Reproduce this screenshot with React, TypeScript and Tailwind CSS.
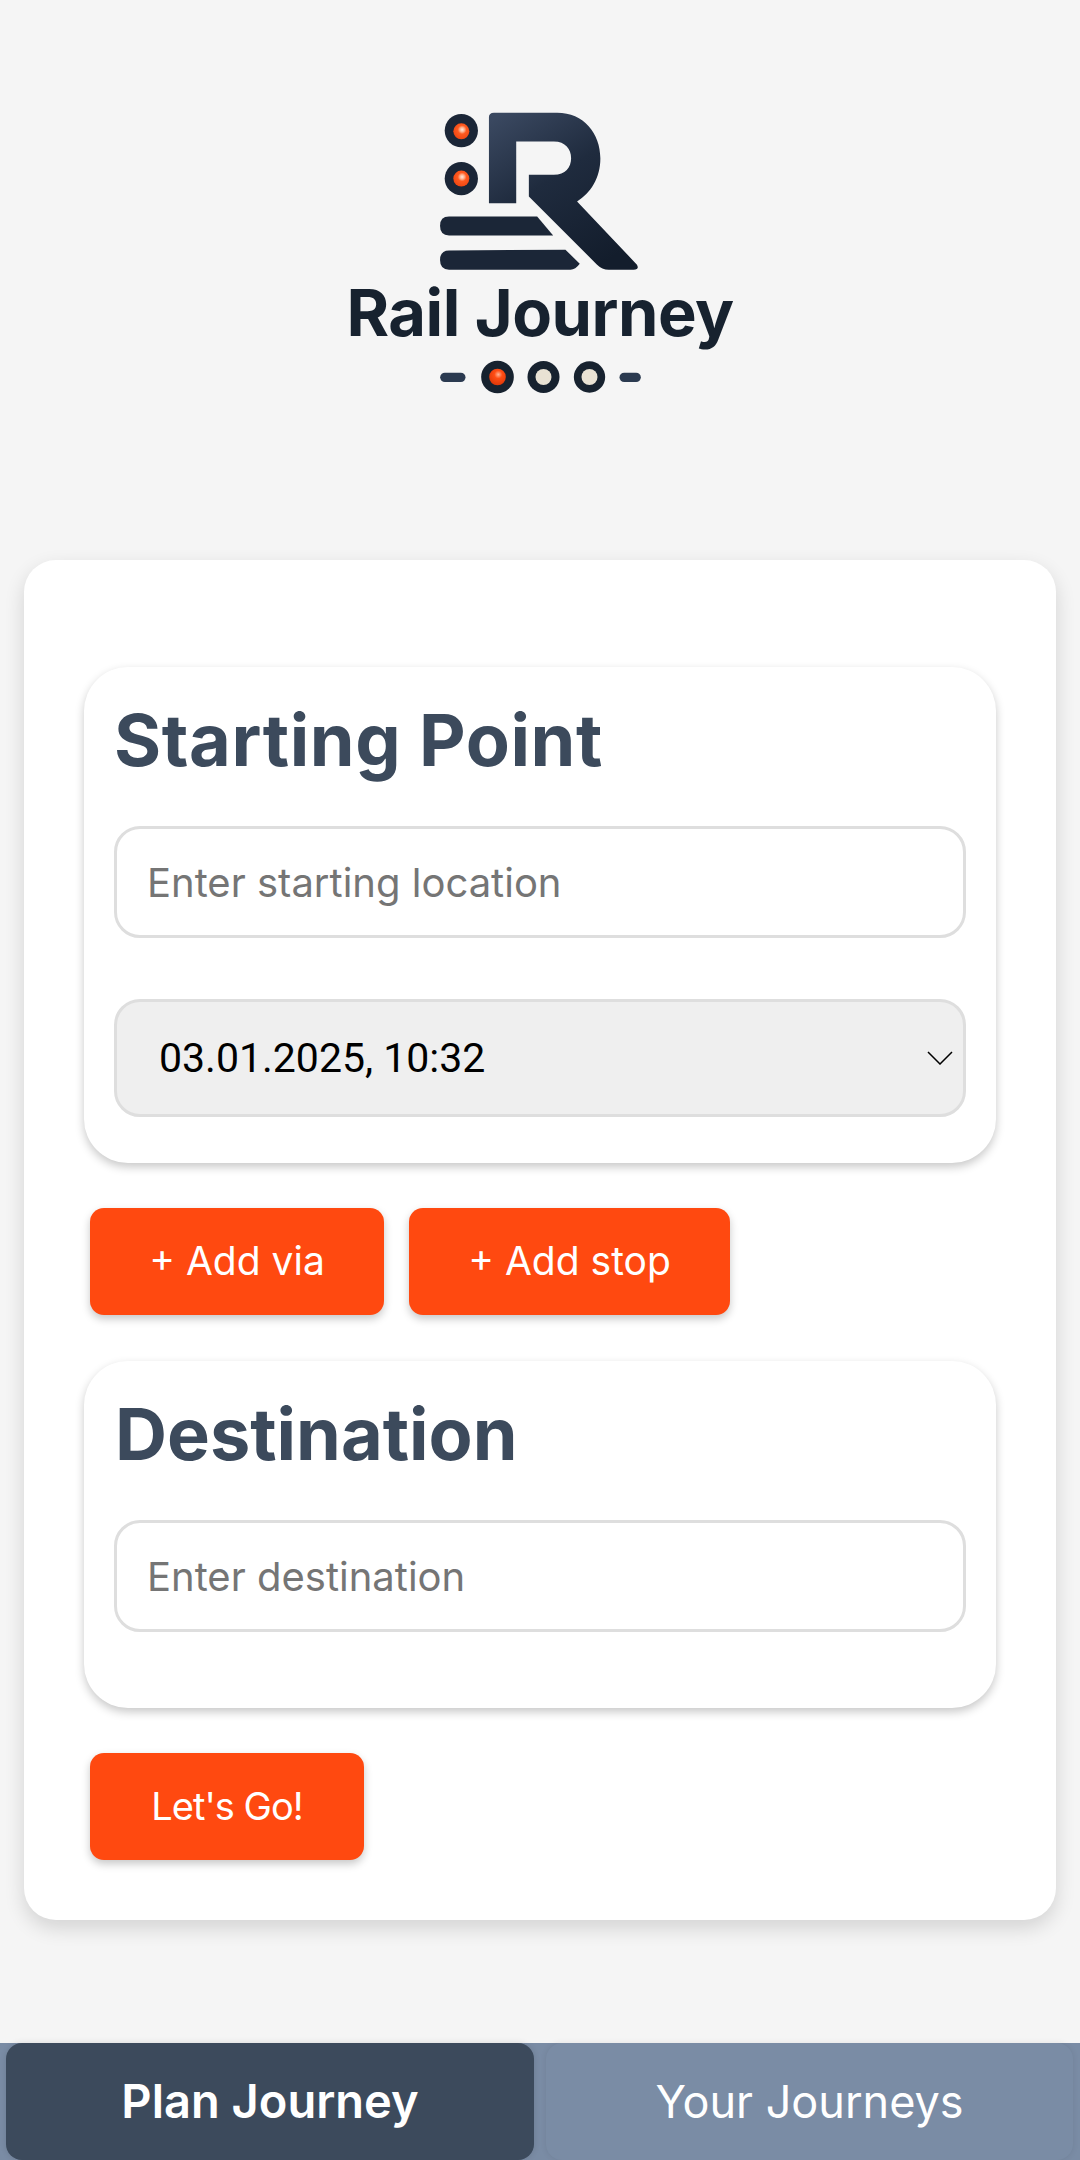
const font = "font-['Inter','Liberation_Sans',sans-serif]";

function LogoMark() {
  return (
    <svg width="207" height="163" viewBox="350 60 620 490" fill="none">
      <defs>
        <linearGradient id="rGrad" x1="0.1" y1="0" x2="0.7" y2="1">
          <stop offset="0" stopColor="#3a4860" />
          <stop offset="0.45" stopColor="#1f2b3e" />
          <stop offset="1" stopColor="#131d2c" />
        </linearGradient>
        <radialGradient id="orangeGlow" cx="0.55" cy="0.4" r="0.65">
          <stop offset="0" stopColor="#ffe9de" />
          <stop offset="0.22" stopColor="#ffb08c" />
          <stop offset="0.42" stopColor="#ff5a20" />
          <stop offset="1" stopColor="#ee4410" />
        </radialGradient>
      </defs>
      <path
        d="M505 82 Q505 68 520 68 L710 68 C790 68 840 130 840 205 C840 265 810 310 770 335 L950 525 Q958 540 940 540 L865 540 Q845 540 830 525 L625 320 L625 255 L700 255 C735 255 752 232 752 205 C752 178 735 155 700 155 L587 155 L587 340 L505 340 Z"
        fill="url(#rGrad)"
      />
      <path d="M385 380 L650 380 L698 437 L385 437 Q358 437 358 408 Q358 380 385 380 Z" fill="#1b2637" />
      <path d="M385 482 L735 480 L778 522 Q765 540 750 540 L385 540 Q358 540 358 511 Q358 482 385 482 Z" fill="#1b2637" />
      <circle cx="422" cy="122" r="50" fill="#1b2637" />
      <circle cx="422" cy="124" r="24" fill="url(#orangeGlow)" />
      <circle cx="422" cy="266" r="50" fill="#1b2637" />
      <circle cx="422" cy="266" r="24" fill="url(#orangeGlow)" />
    </svg>
  );
}

function LogoDots() {
  return (
    <svg width="201" height="34" viewBox="360 810 602 102" fill="none">
      <defs>
        <radialGradient id="orangeGlow2" cx="0.55" cy="0.35" r="0.6">
          <stop offset="0" stopColor="#ffb596" />
          <stop offset="0.4" stopColor="#ff4d14" />
          <stop offset="1" stopColor="#e23a0a" />
        </radialGradient>
      </defs>
      <rect x="360" y="848" width="76" height="28" rx="14" fill="#2b3a50" />
      <rect x="898" y="848" width="64" height="28" rx="14" fill="#2b3a50" />
      <circle cx="532" cy="861" r="49" fill="#17222f" />
      <circle cx="532" cy="861" r="25" fill="url(#orangeGlow2)" />
      <circle cx="670" cy="861" r="48" fill="#17222f" />
      <circle cx="670" cy="861" r="24" fill="#e9e2d4" />
      <circle cx="808" cy="861" r="47" fill="#17222f" />
      <circle cx="808" cy="861" r="24" fill="#e9e2d4" />
    </svg>
  );
}

function OrangeButton({ label, className }: { label: string; className: string }) {
  return (
    <button className={`${className} h-[107px] rounded-[14px] bg-[#ff4910] text-white shadow-[0_4px_8px_rgba(0,0,0,0.22)]`}>
      {label}
    </button>
  );
}

function TextField({ placeholder }: { placeholder: string }) {
  return (
    <input
      placeholder={placeholder}
      className="block w-full h-[112px] rounded-[26px] border-[3px] border-[#dedede] bg-white pl-[30px] pr-[30px] text-[40px] placeholder:text-[#757575] outline-none"
    />
  );
}

export default function App() {
  return (
    <div className={`${font} w-[1080px] h-[2160px] bg-[#f5f5f5] flex flex-col`}>
      <header className="h-[560px] pt-[110px] flex flex-col items-center">
        <LogoMark />
        <div className="mt-[1px] text-[65px] leading-[78px] font-bold text-[#17222f] tracking-[-0.5px]">Rail Journey</div>
        <div className="mt-[8px]">
          <LogoDots />
        </div>
      </header>

      <main className="mx-[24px] h-[1360px] rounded-[32px] bg-white px-[60px] pt-[107px] shadow-[0_8px_20px_rgba(0,0,0,0.14)]">
        <section className="rounded-[44px] bg-white px-[30px] pb-[46px] shadow-[0_4px_10px_rgba(0,0,0,0.22)]">
          <h2 className="h-[159px] pt-[29px] text-[72px] leading-[88px] font-bold text-[#3c4a5c] tracking-[0.6px]">Starting Point</h2>
          <TextField placeholder="Enter starting location" />
          <div className="relative mt-[61px]">
            <select className="block w-full h-[118px] appearance-none rounded-[26px] border-[3px] border-[#dedede] bg-[#efefef] pl-[42px] pt-[2px] text-[41px] font-['Roboto',sans-serif] text-black outline-none">
              <option>03.01.2025, 10:32</option>
            </select>
            <svg className="absolute right-[13px] top-[52px]" width="26" height="14" viewBox="0 0 26 14" fill="none" stroke="#000" strokeWidth="1.5">
              <polyline points="1,1 13,13 25,1" />
            </svg>
          </div>
        </section>

        <div className="mt-[45px] ml-[6px] flex gap-[25px]">
          <OrangeButton label="+ Add via" className="w-[294px] text-[39px]" />
          <OrangeButton label="+ Add stop" className="w-[321px] text-[39px]" />
        </div>

        <section className="mt-[46px] rounded-[44px] bg-white px-[30px] pb-[76px] pl-[31px] shadow-[0_4px_10px_rgba(0,0,0,0.22)]">
          <h2 className="h-[159px] pt-[29px] text-[72px] leading-[88px] font-bold text-[#3c4a5c]">Destination</h2>
          <div className="-ml-[1px]">
            <TextField placeholder="Enter destination" />
          </div>
        </section>

        <div className="mt-[45px] ml-[6px]">
          <OrangeButton label="Let's Go!" className="w-[274px] text-[38px] tracking-[-1px]" />
        </div>
      </main>

      <nav className="mt-auto h-[117px] bg-[#7a8ca5] flex gap-[12px] pl-[6px]">
        <button className="w-[528px] rounded-[16px] bg-[#3c4a5c] text-white text-[47px] font-semibold shadow-[0_0_6px_rgba(0,0,0,0.12)]">Plan Journey</button>
        <button className="w-[527px] rounded-[16px] bg-[#7a8ca5] text-white text-[45px] shadow-[0_0_6px_rgba(0,0,0,0.08)]">Your Journeys</button>
      </nav>
    </div>
  );
}
